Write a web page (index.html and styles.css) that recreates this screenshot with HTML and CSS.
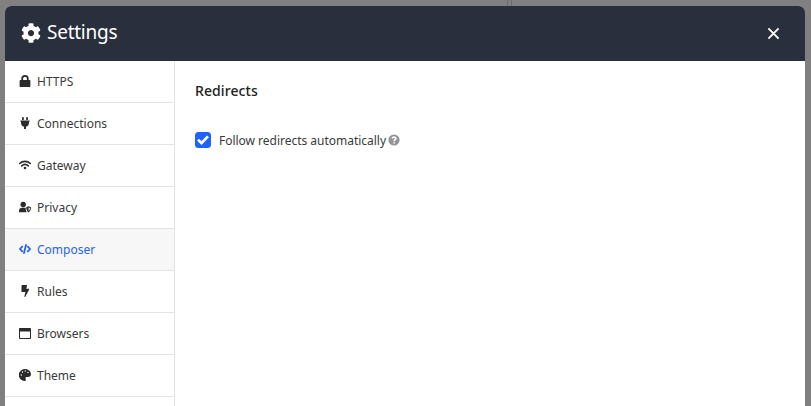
FILE: index.html
```html
<!DOCTYPE html>
<html lang="en">
<head>
<meta charset="utf-8">
<title>Settings</title>
<link rel="stylesheet" href="styles.css">
</head>
<body>
<div class="splitter"></div>
<div class="modal">
  <header class="modal-header">
    <svg class="gear" viewBox="0 0 512 512"><path d="M487.4 315.7l-42.6-24.6c4.3-23.2 4.3-47 0-70.2l42.6-24.6c4.9-2.8 7.1-8.6 5.5-14-11.1-35.6-30-67.8-54.7-94.6-3.8-4.1-10-5.1-14.8-2.3L380.800 110c-17.900-15.400-38.500-27.300-60.800-35.100V25.800c0-5.600-3.900-10.500-9.400-11.700-36.700-8.200-74.300-7.800-109.200 0-5.500 1.200-9.400 6.100-9.400 11.700V75c-22.200 7.900-42.800 19.800-60.800 35.100L88.700 85.500c-4.900-2.800-11-1.900-14.800 2.300-24.700 26.700-43.600 58.900-54.700 94.600-1.700 5.400.6 11.200 5.500 14L67.300 221c-4.300 23.200-4.300 47 0 70.200l-42.600 24.600c-4.900 2.800-7.100 8.600-5.500 14 11.100 35.600 30 67.800 54.700 94.600 3.800 4.100 10 5.100 14.800 2.300l42.600-24.600c17.900 15.400 38.500 27.300 60.800 35.100v49.200c0 5.600 3.900 10.500 9.400 11.700 36.700 8.200 74.300 7.800 109.200 0 5.500-1.200 9.400-6.100 9.400-11.700v-49.200c22.200-7.900 42.800-19.800 60.800-35.100l42.600 24.600c4.900 2.800 11 1.900 14.800-2.300 24.700-26.700 43.600-58.900 54.700-94.600 1.500-5.500-.7-11.300-5.600-14.100zM256 336c-44.100 0-80-35.900-80-80s35.900-80 80-80 80 35.900 80 80-35.900 80-80 80z"/></svg>
    <h1 class="modal-title">Settings</h1>
    <svg class="close" viewBox="0 0 14 14"><path d="M1.500 1.500l11 11M12.500 1.500l-11 11"/></svg>
  </header>
  <div class="modal-body">
    <nav class="sidebar">
      <a class="item"><svg class="icon" viewBox="0 0 12 12"><path fill-rule="evenodd" d="M2.300 5V3.700a3.700 3.700 0 0 1 7.400 0V5h.6c.6 0 1.100.5 1.100 1.100v4.800c0 .6-.5 1.100-1.100 1.100H1.700C1.100 12 .6 11.500.6 10.900V6.100C.6 5.500 1.100 5 1.700 5zm1.800 0h3.800V3.700a1.900 1.900 0 0 0-3.800 0z"/></svg>HTTPS</a>
      <a class="item"><svg class="icon" viewBox="0 0 12 12"><path d="M3.100 3V.8a.8.8 0 0 1 1.700 0V3zm4.100 0V.8a.8.8 0 0 1 1.700 0V3zM1.700 3.500h8.600c.5 0 .5 1.200 0 1.200H10V6c0 1.900-1.300 3.300-3 3.700V12H5V9.700C3.300 9.300 2 7.900 2 6V4.700h-.3c-.5 0-.5-1.200 0-1.200z"/></svg>Connections</a>
      <a class="item"><svg class="icon" viewBox="0 0 12 12"><path class="stroke" d="M.7 4.500a7.800 7.800 0 0 1 10.600 0M2.700 6.900a5 5 0 0 1 6.600 0"/><circle cx="6" cy="9" r="1.300"/></svg>Gateway</a>
      <a class="item"><svg class="icon" viewBox="0 0 12 12"><circle cx="4.200" cy="3.500" r="2.700"/><path d="M0 11.200V9.700c0-1.800 1.300-3 3-3h2.600c.4 0 .8.100 1.100.2 0 1.700.3 3.500 1.300 4.300z"/><path fill-rule="evenodd" d="M9.600 5.300L12 6.300c0 2-.7 4.300-2.400 5.100-1.700-.8-2.400-3.100-2.400-5.100zm0 1.200v3.700c.8-.6 1.300-1.700 1.400-3.100z"/></svg>Privacy</a>
      <a class="item active"><svg class="icon" viewBox="0 0 12 12"><path class="stroke bold" d="M3.200 3.600L.9 6l2.300 2.400M8.800 3.600L11.100 6 8.800 8.400M7 1.900L5 10.100"/></svg>Composer</a>
      <a class="item"><svg class="icon" viewBox="0 0 12 12"><path d="M3.100 0h4.500c.4 0 .6.300.5.600L7.300 3.800h2.400c.4 0 .7.400.5.800l-3.900 7.100c-.3.500-1.100.3-.9-.4l1-4.400H3c-.4 0-.6-.3-.6-.7L2.600.5c0-.3.200-.5.500-.5z"/></svg>Rules</a>
      <a class="item"><svg class="icon" viewBox="0 0 12 12"><path fill-rule="evenodd" d="M1 1h10c.6 0 1 .4 1 1v9c0 .6-.4 1-1 1H1c-.6 0-1-.4-1-1V2c0-.6.4-1 1-1zM1 4.500V11h10V4.500z"/></svg>Browsers</a>
      <a class="item"><svg class="icon" viewBox="0 0 12 12"><path fill-rule="evenodd" d="M6 0c3.300 0 6 2.400 6 5.300 0 1.800-1.400 2.700-3 2.700H7.700c-1 0-1.500.9-1.100 1.700.6 1.200.2 2.300-.9 2.300A6 6 0 0 1 6 0zM2.300 5.300a.7.7 0 1 0 0 1.400.7.700 0 0 0 0-1.400zm1.200-3a.7.7 0 1 0 0 1.400.7.700 0 0 0 0-1.400zM6.300 1.200a.7.7 0 1 0 0 1.400.7.700 0 0 0 0-1.400zM9 2.700a.7.7 0 1 0 0 1.400.7.700 0 0 0 0-1.400z"/></svg>Theme</a>
      <div class="item"></div>
    </nav>
    <main class="content">
      <h2 class="heading">Redirects</h2>
      <div class="option">
        <svg class="checkbox" viewBox="0 0 16 16"><rect width="16" height="16" rx="3.500"/><path d="M3 7.700l3.500 3.300 6.500-6.600"/></svg>
        <span class="label">Follow redirects automatically</span>
        <svg class="help" viewBox="0 0 12 12"><circle cx="6" cy="6" r="5.600"/><path d="M4.200 4.500c.3-2 3.700-1.800 3.700.1C7.900 5.900 6.100 5.900 6.100 7.200M6.100 8.300v1.300"/></svg>
      </div>
    </main>
  </div>
</div>
</body>
</html>
```

FILE: styles.css
```css
* { box-sizing: border-box; }

body {
  margin: 0;
  height: 406px;
  padding: 6px 6px 0 5px;
  overflow: hidden;
  background: #808080;
  font-family: "Noto Sans", "Open Sans", sans-serif;
  color: #333;
}

.splitter {
  position: absolute;
  top: 0;
  left: 507px;
  width: 5px;
  height: 6px;
  border: solid #6b6b6b;
  border-width: 0 1px;
}

.modal {
  position: relative;
  height: 400px;
  overflow: hidden;
  border-radius: 6px 6px 0 0;
  background: #fff;
}

.modal-header {
  display: flex;
  align-items: center;
  height: 55px;
  padding: 0 25px 1px 16px;
  background: #2a2f3d;
  color: #fff;
}

.gear { width: 20px; height: 20px; fill: #fff; }

.modal-title {
  margin: -2px auto 0 6px;
  font-size: 19px;
  font-weight: 400;
  line-height: 28px;
  letter-spacing: -0.25px;
}

.close {
  width: 13px;
  height: 13px;
  fill: none;
  stroke: #fff;
  stroke-width: 2;
}

.modal-body { display: flex; height: 345px; }

.sidebar {
  width: 170px;
  flex: none;
  overflow: hidden;
  border-right: 1px solid #e3e3e3;
}

.item {
  display: flex;
  align-items: center;
  gap: 6px;
  height: 42px;
  padding-left: 14px;
  border-bottom: 1px solid #e3e3e3;
  font-size: 12px;
  color: #3a3a3a;
}

.active { background: #f7f7f7; color: #2563f5; }

.icon { width: 12px; height: 12px; margin-bottom: 1px; fill: #2b2b2b; color: #2b2b2b; }
.active .icon { color: #2563f5; }
.stroke { fill: none; stroke: currentColor; stroke-width: 1.6; stroke-linecap: round; stroke-linejoin: round; }
.bold { stroke-width: 1.8; }

.content { padding: 20px; }

.heading {
  margin: 0;
  font-size: 14px;
  font-weight: 500;
  line-height: 20px;
  letter-spacing: 0.1px;
  color: #222;
}

.option {
  display: flex;
  align-items: center;
  height: 20px;
  margin-top: 29px;
  font-size: 12px;
}

.checkbox { width: 16px; height: 16px; fill: #1f62fe; }
.checkbox path { fill: none; stroke: #fff; stroke-width: 2.7; }
.label { margin: 0 2px 0 8px; letter-spacing: -0.02px; color: #3a3a3a; }
.help { width: 12px; height: 12px; fill: #949494; }
.help path { fill: none; stroke: #fff; stroke-width: 1.7; }
```
